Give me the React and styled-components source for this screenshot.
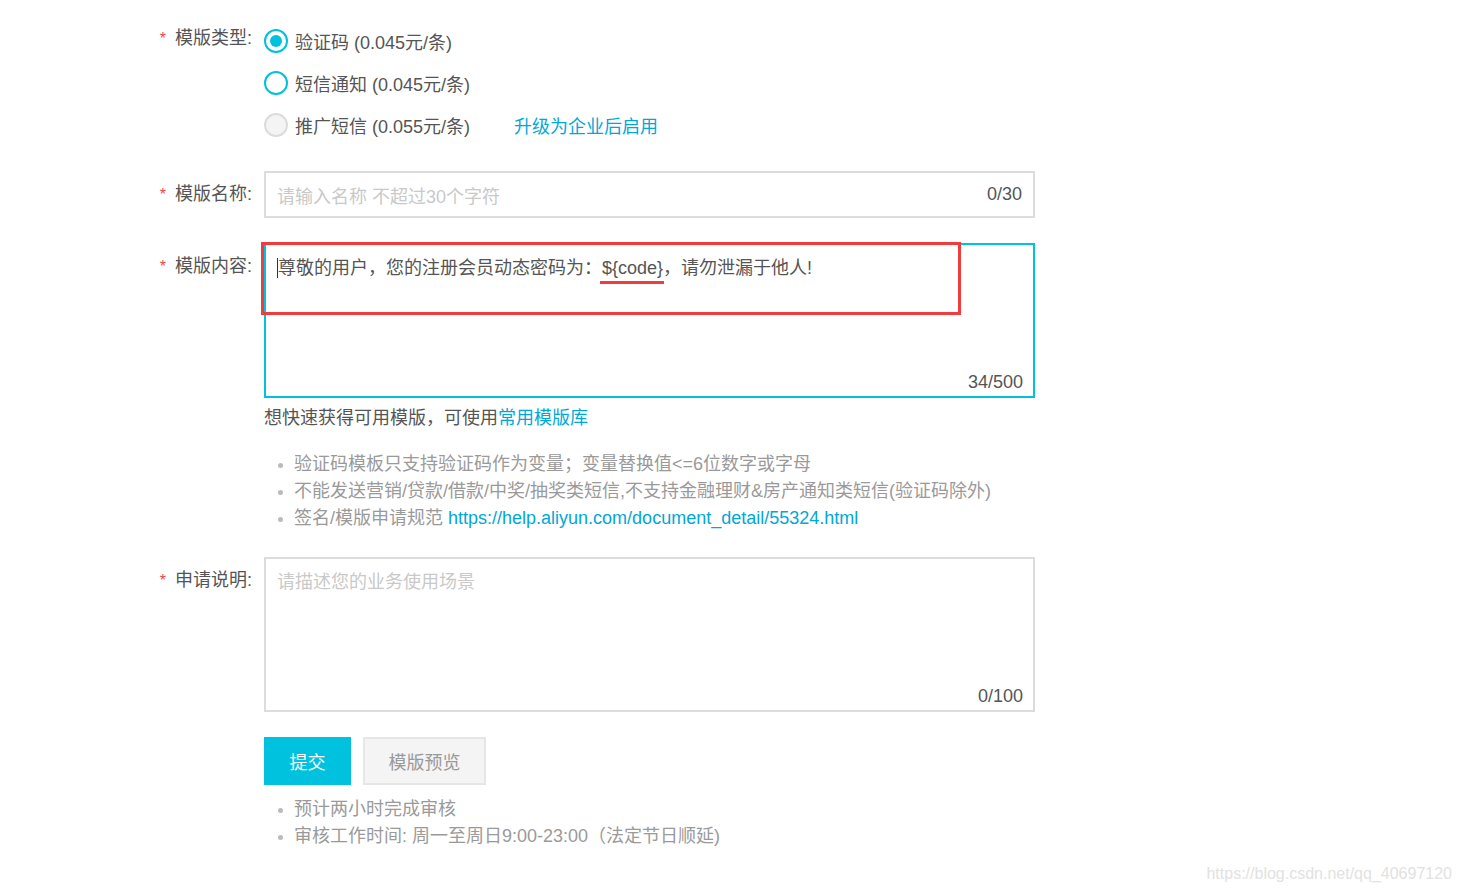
import React from 'react'
import styled, { createGlobalStyle } from 'styled-components'

const GlobalStyle = createGlobalStyle`
  html, body {
    margin: 0;
    padding: 0;
    background: #fff;
    overflow: hidden;
  }
  body {
    font-family: "Liberation Sans", "Noto Sans CJK SC", sans-serif;
    font-size: 18px;
    color: #555;
  }
`

const radios = [
  { text: '验证码 (0.045元/条)', state: 'checked' },
  { text: '短信通知 (0.045元/条)', state: 'normal' },
  { text: '推广短信 (0.055元/条)', state: 'disabled', extra: '升级为企业后启用' },
]

const tips = [
  '验证码模板只支持验证码作为变量；变量替换值<=6位数字或字母',
  '不能发送营销/贷款/借款/中奖/抽奖类短信,不支持金融理财&房产通知类短信(验证码除外)',
]

function App() {
  return (
    <Page>
      <GlobalStyle />
      <Form>
        <Row>
          <Label>
            <Star>*</Star>模版类型:
          </Label>
          <RadioGroup>
            {radios.map((r) => (
              <RadioItem key={r.text}>
                <RadioCircle $state={r.state} />
                <RadioText>{r.text}</RadioText>
                {r.extra ? <Link $gap>{r.extra}</Link> : null}
              </RadioItem>
            ))}
          </RadioGroup>
        </Row>

        <Row>
          <Label>
            <Star>*</Star>模版名称:
          </Label>
          <Input>
            <Placeholder>请输入名称 不超过30个字符</Placeholder>
            <Counter>0/30</Counter>
          </Input>
        </Row>

        <Row>
          <Label>
            <Star>*</Star>模版内容:
          </Label>
          <div>
            <AreaWrap>
              <TextArea $active>
                <Caret />
                尊敬的用户，您的注册会员动态密码为：<Code>{'${code}'}</Code>，请勿泄漏于他人!
              </TextArea>
              <AreaCounter>34/500</AreaCounter>
              <MarkBox />
            </AreaWrap>
            <Hint>
              想快速获得可用模版，可使用<Link>常用模版库</Link>
            </Hint>
            <Tips $top={19}>
              {tips.map((t) => (
                <Tip key={t}>{t}</Tip>
              ))}
              <Tip>
                签名/模版申请规范 <Link>https://help.aliyun.com/document_detail/55324.html</Link>
              </Tip>
            </Tips>
          </div>
        </Row>

        <Row>
          <Label>
            <Star>*</Star>申请说明:
          </Label>
          <AreaWrap>
            <TextArea>
              <Placeholder>请描述您的业务使用场景</Placeholder>
            </TextArea>
            <AreaCounter>0/100</AreaCounter>
          </AreaWrap>
        </Row>

        <Row>
          <span />
          <div>
            <Buttons>
              <PrimaryButton>提交</PrimaryButton>
              <GhostButton>模版预览</GhostButton>
            </Buttons>
            <Tips $top={11}>
              <Tip>预计两小时完成审核</Tip>
              <Tip>审核工作时间: 周一至周日9:00-23:00（法定节日顺延)</Tip>
            </Tips>
          </div>
        </Row>
      </Form>
      <Watermark>https://blog.csdn.net/qq_40697120</Watermark>
    </Page>
  )
}

const Page = styled.div`
  position: relative;
  width: 1462px;
  height: 891px;
  overflow: hidden;
`

const Form = styled.div`
  padding-top: 15px;
  display: flex;
  flex-direction: column;
  gap: 25px;
`

const Row = styled.div`
  display: grid;
  grid-template-columns: 252px 771px;
  column-gap: 12px;
  align-items: start;
`

const Label = styled.div`
  text-align: right;
  line-height: 46px;
  color: #555;
  white-space: nowrap;
`

const Star = styled.span`
  color: #f04645;
  margin-right: 9px;
  font-size: 16px;
`

const RadioGroup = styled.div`
  padding-top: 5px;
  display: flex;
  flex-direction: column;
`

const RadioItem = styled.div`
  display: flex;
  align-items: center;
  height: 42px;
`

const RadioCircle = styled.span`
  position: relative;
  box-sizing: border-box;
  width: 24px;
  height: 24px;
  border-radius: 50%;
  border: 2px solid ${(p) => (p.$state === 'disabled' ? '#dcdcdc' : '#00c1de')};
  background: ${(p) => (p.$state === 'disabled' ? '#f4f4f4' : '#fff')};
  margin-right: 7px;

  &::after {
    content: '';
    display: ${(p) => (p.$state === 'checked' ? 'block' : 'none')};
    position: absolute;
    left: 4px;
    top: 4px;
    width: 12px;
    height: 12px;
    border-radius: 50%;
    background: #00c1de;
  }
`

const RadioText = styled.span`
  color: #555;
`

const Link = styled.span`
  color: #00a8d6;
  margin-left: ${(p) => (p.$gap ? '44px' : '0')};
`

const Input = styled.div`
  box-sizing: border-box;
  height: 47px;
  border: 2px solid #dcdcdc;
  display: flex;
  align-items: center;
  justify-content: space-between;
  padding: 0 11px;
`

const Placeholder = styled.span`
  color: #c9c9c9;
`

const Counter = styled.span`
  color: #555;
`

const AreaWrap = styled.div`
  position: relative;
`

const TextArea = styled.div`
  box-sizing: border-box;
  height: 155px;
  border: 2px solid ${(p) => (p.$active ? '#00c1de' : '#dcdcdc')};
  padding: 10px 11px;
  line-height: 27px;
  color: #555;
`

const Caret = styled.span`
  display: inline-block;
  width: 1px;
  height: 20px;
  background: #333;
  vertical-align: -4px;
`

const Code = styled.span`
  position: relative;

  &::after {
    content: '';
    position: absolute;
    left: -2px;
    right: -1px;
    bottom: -6px;
    height: 3px;
    background: #f03c3c;
  }
`

const AreaCounter = styled.span`
  position: absolute;
  right: 12px;
  bottom: 5px;
  line-height: 22px;
  color: #555;
`

const MarkBox = styled.div`
  position: absolute;
  left: -3px;
  top: -1px;
  width: 700px;
  height: 73px;
  box-sizing: border-box;
  border: 3px solid #f03c3c;
`

const Hint = styled.div`
  margin-top: 7px;
  line-height: 27px;
  color: #555;
`

const Tips = styled.ul`
  list-style: none;
  margin: ${(p) => p.$top}px 0 0;
  padding: 0 0 0 14px;
`

const Tip = styled.li`
  position: relative;
  line-height: 27px;
  padding-left: 16px;
  color: #9a9a9a;
  white-space: nowrap;

  &::before {
    content: '';
    position: absolute;
    left: 0;
    top: 12px;
    width: 5px;
    height: 5px;
    border-radius: 50%;
    background: #bbb;
  }
`

const Buttons = styled.div`
  display: flex;
  gap: 12px;
`

const PrimaryButton = styled.div`
  width: 87px;
  height: 48px;
  background: #00c1de;
  color: #fff;
  display: flex;
  align-items: center;
  justify-content: center;
`

const GhostButton = styled.div`
  box-sizing: border-box;
  width: 123px;
  height: 48px;
  background: #f4f4f4;
  border: 2px solid #e6e6e6;
  color: #999;
  display: flex;
  align-items: center;
  justify-content: center;
`

const Watermark = styled.div`
  position: absolute;
  right: 10px;
  bottom: 8px;
  font-size: 16px;
  color: #e2e2e2;
`

export default App
